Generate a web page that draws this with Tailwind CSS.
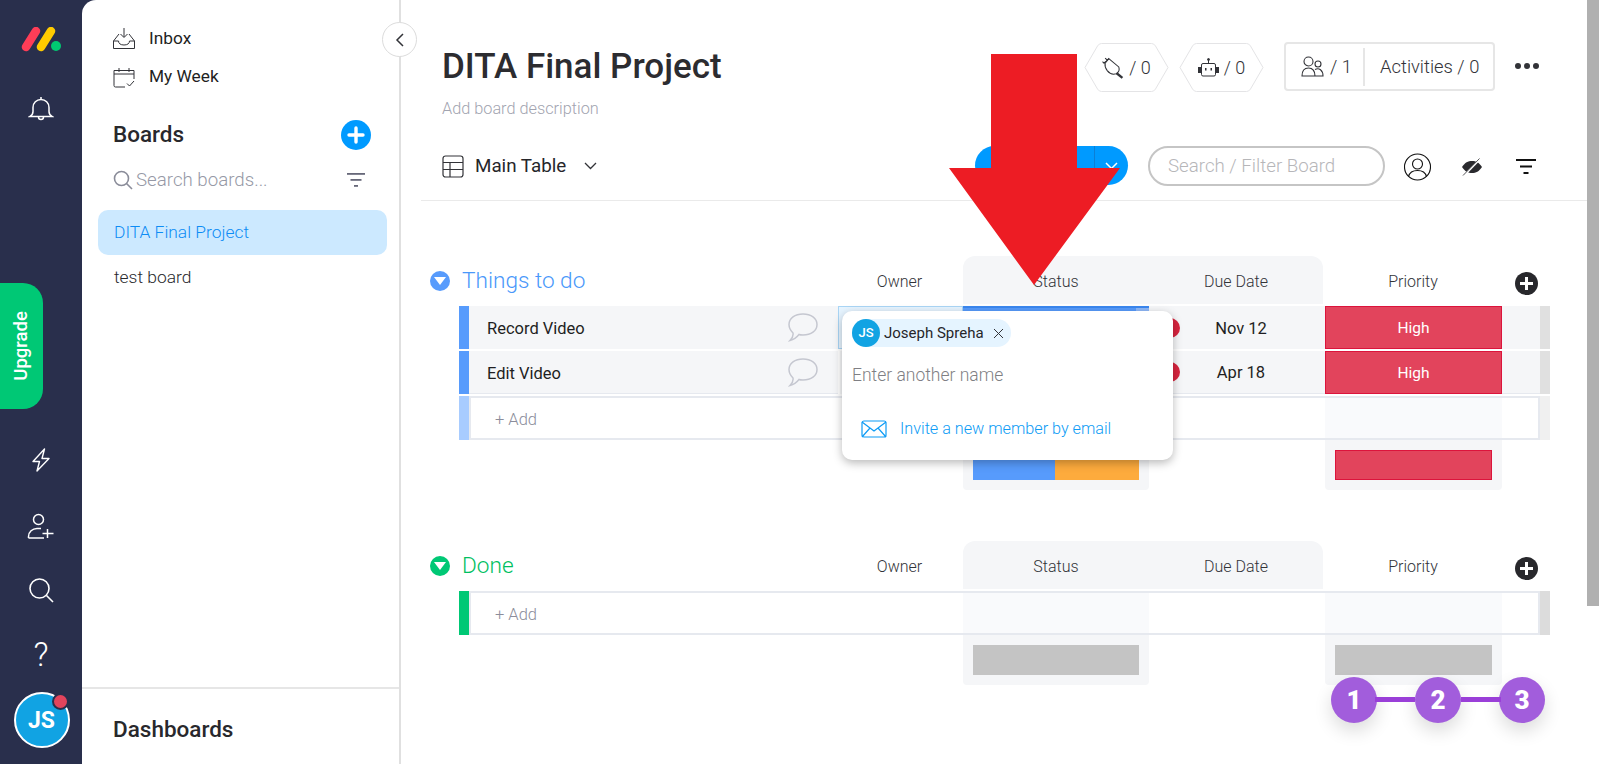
<!DOCTYPE html>
<html><head><meta charset="utf-8"><script src="https://cdn.jsdelivr.net/npm/@tailwindcss/browser@4"></script></head>
<body class="m-0">
<div class="flex w-[1599px] h-[764px] overflow-hidden bg-[#292f4c] font-['Roboto',sans-serif] text-[#323338]">
  <!-- rail -->
  <nav class="w-[82px] shrink-0 flex flex-col items-center pt-[27px]">
    <svg width="42" height="26" viewBox="0 0 42 26"><path d="M6 20 L16 4" stroke="#ff3d57" stroke-width="8.500" stroke-linecap="round"/><path d="M21 20 L31 4" stroke="#ffcb00" stroke-width="8.500" stroke-linecap="round"/><circle cx="36" cy="19" r="5" fill="#00ca72"/></svg>
    <svg class="mt-[43px]" width="26" height="26" viewBox="0 0 26 26" fill="none" stroke="#fff" stroke-width="1.500"><path d="M2 20.500h22c-2.500-1.500-3-3-3-5v-4c0-4.500-3.500-8-8-8s-8 3.500-8 8v4c0 2-.5 3.500-3 5z"/><path d="M10.500 21c0 1.500 1 2.500 2.500 2.500s2.500-1 2.500-2.500M13 1v2.500"/></svg>
    <div class="mt-[161px] self-start w-[43px] h-[126px] bg-[#00c875] rounded-r-[20px] flex items-center justify-center">
      <span class="-rotate-90 text-white text-[18.500px] font-medium whitespace-nowrap">Upgrade</span>
    </div>
    <svg class="mt-[39px]" width="24" height="24" viewBox="0 0 24 24" fill="none" stroke="#fff" stroke-width="1.400" stroke-linejoin="round"><path d="M15.500 1 4 13.500h6.500L8 23l12-12.500h-7z"/></svg>
    <svg class="mt-[41px]" width="28" height="26" viewBox="0 0 28 26" fill="none" stroke="#fff" stroke-width="1.500"><circle cx="11.500" cy="6.500" r="5"/><path d="M1.500 25v-1.500c0-4.500 4-8 8.500-8h4M1.500 25H17M20.500 16v9M15.500 20.500h11" /></svg>
    <svg class="mt-[38px]" width="26" height="26" viewBox="0 0 26 26" fill="none" stroke="#fff" stroke-width="1.600"><circle cx="11.500" cy="11.500" r="9.500"/><path d="M18.500 18.500 25 25"/></svg>
    <div class="mt-[37px] h-[30px] text-white text-[33px] leading-[30px] font-light">?</div>
    <div class="relative mt-[22px] ml-[1px] w-[56px] h-[56px] rounded-full bg-[#11a3e3] border-2 border-white flex items-center justify-center text-white text-[23px] font-bold pt-[2px]">JS
      <span class="absolute right-[-1px] top-[-1px] w-[17px] h-[17px] rounded-full bg-[#e2445c] border-2 border-[#292f4c]"></span>
    </div>
  </nav>
  <!-- sidebar -->
  <aside class="relative z-10 w-[319px] shrink-0 bg-white rounded-tl-[14px] border-r-2 border-[#e0e0e0] flex flex-col">
    <div class="flex-1 pl-[31px] pt-[28px]">
      <div class="flex items-center gap-[14px] h-[22px] text-[17.300px] text-[#1f1f23]">
        <svg width="22" height="22" viewBox="0 0 22 22" fill="none" stroke="#323338" stroke-width="1"><path d="M11 0v9M7.500 6 11 9.500 14.500 6M6 6 .5 13v7.500h21V13L16 6M.5 13h5c0 2.500 2 4 5.500 4s5.500-1.500 5.500-4h5"/></svg>
        <span>Inbox</span>
      </div>
      <div class="flex items-center gap-[14px] h-[22px] mt-[16px] text-[17.300px] text-[#1f1f23]">
        <svg width="22" height="22" viewBox="0 0 22 22" fill="none" stroke="#323338" stroke-width="1"><path d="M12 21H2.500A1.500 1.500 0 0 1 1 19.500V4.500h20V13M1 8h20M6 2v4M16 2v4M14 17.500l2.500 2.500 4.500-5"/></svg>
        <span>My Week</span>
      </div>
      <div class="flex items-center justify-between h-[30px] mt-[32px] pr-[28px]">
        <span class="text-[22.500px] font-medium text-[#28282c]">Boards</span>
        <span class="w-[30px] h-[30px] rounded-full bg-[#009aff] flex items-center justify-center">
          <svg width="18" height="18" viewBox="0 0 18 18"><path d="M9 2v14M2 9h14" stroke="#fff" stroke-width="3.400" stroke-linecap="round"/></svg>
        </span>
      </div>
      <div class="flex items-center h-[24px] mt-[18px] pr-[34px]">
        <svg width="20" height="20" viewBox="0 0 20 20" fill="none" stroke="#8a8c99" stroke-width="1.600"><circle cx="8.500" cy="8.500" r="7"/><path d="m13.500 13.500 5.500 5.500"/></svg>
        <span class="ml-[3px] text-[18.700px] font-light text-[#9699a6]">Search boards...</span>
        <svg class="ml-auto" width="18" height="16" viewBox="0 0 18 16" fill="#676879"><rect width="18" height="1.800" y="1"/><rect x="3.500" width="11" height="1.800" y="7"/><rect x="7" width="4" height="1.800" y="13"/></svg>
      </div>
      <div class="-ml-[15px] mr-[12px] mt-[18px] h-[45px] rounded-[10px] bg-[#cce9ff] flex items-center pl-[16px] text-[17.400px] font-light text-[#0d8cf5]">DITA Final Project</div>
      <div class="mt-[10px] ml-[1px] text-[17.400px] font-light text-[#28282c] leading-[24px]">test board</div>
    </div>
    <div class="h-[77px] border-t-2 border-[#e6e6e6] pl-[31px] pt-[26px] text-[22.500px] leading-[28px] font-medium text-[#28282c]">Dashboards</div>
    <button class="absolute right-[-18px] top-[22px] w-[35px] h-[35px] rounded-full bg-white border border-[#dcdcdc] flex items-center justify-center">
      <svg width="10" height="14" viewBox="0 0 10 14" fill="none" stroke="#323338" stroke-width="1.500"><path d="M8 1 2 7l6 6"/></svg>
    </button>
  </aside>
  <!-- main -->
  <main class="relative w-[1186px] shrink-0 bg-white pl-[20px]">
    <!-- board header -->
    <header class="h-[201px] pl-[21px] border-b border-[#eaeaea]">
      <div class="flex items-start h-[146px]">
        <div class="pt-[45px] w-[642px]">
          <h1 class="text-[35px] leading-[44px] font-medium text-[#2c2c30]">DITA Final Project</h1>
          <p class="mt-[7px] text-[16.300px] leading-[26px] font-light text-[#a2a4b0]">Add board description</p>
        </div>
        <div class="relative mt-[43px] w-[85px] h-[49px] flex items-center justify-center gap-[5px] text-[18px] font-light">
          <svg class="absolute inset-0" width="85" height="49" viewBox="0 0 85 49" fill="none" stroke="#e4e4e6"><path d="M1 24.500 13.500 3q1.500-2.500 4-2.500h50q2.500 0 4 2.500L84 24.500 71.500 46q-1.500 2.500-4 2.500h-50q-2.500 0-4-2.500z"/></svg>
          <svg class="relative" width="22" height="22" viewBox="0 0 21 21" fill="none" stroke="#323338" stroke-width="1"><path d="M6.500 1.500 16 9.500c1 3-.5 5.500-2.500 6.500-3 1-6.500-.5-8.500-3-1.500-2-2.500-4.500-2-7z"/><path d="M4 4 1.500 6M6.500 1.500 4 4M5 3 3 1M2.500 6.500.5 4.500"/><path d="m14 15.500 5.500 4.500" stroke-width="2.200"/></svg>
          <span class="relative">/ 0</span>
        </div>
        <div class="relative mt-[43px] ml-[10px] w-[85px] h-[49px] flex items-center justify-center gap-[5px] text-[18px] font-light">
          <svg class="absolute inset-0" width="85" height="49" viewBox="0 0 85 49" fill="none" stroke="#e4e4e6"><path d="M1 24.500 13.500 3q1.500-2.500 4-2.500h50q2.500 0 4 2.500L84 24.500 71.500 46q-1.500 2.500-4 2.500h-50q-2.500 0-4-2.500z"/></svg>
          <svg class="relative" width="21" height="19" viewBox="0 0 21 19" fill="none" stroke="#323338" stroke-width="1"><circle cx="10.500" cy="1.500" r="1" fill="#323338"/><path d="M10.500 2v3.500M5 5.500h11a1.500 1.500 0 0 1 1.500 1.500v9.500a1.500 1.500 0 0 1-1.500 1.500H5a1.500 1.500 0 0 1-1.500-1.500V7A1.500 1.500 0 0 1 5 5.500z"/><rect x=".5" y="9.500" width="2.500" height="5" fill="#323338"/><rect x="18" y="9.500" width="2.500" height="5" fill="#323338"/><rect x="7" y="10" width="1.500" height="2.500" fill="#323338" stroke="none"/><rect x="12.500" y="10" width="1.500" height="2.500" fill="#323338" stroke="none"/></svg>
          <span class="relative">/ 0</span>
        </div>
        <div class="mt-[42px] ml-[20px] w-[211px] h-[49px] rounded-[4px] border-2 border-[#e6e6e6] flex items-center text-[18.400px] font-light">
          <div class="w-[79px] flex items-center pl-[15px] gap-[6px] h-[38px] border-r-2 border-[#e6e6e6]">
            <svg width="23" height="21" viewBox="0 0 23 21" fill="none" stroke="#323338" stroke-width="1.100"><circle cx="7.500" cy="5.500" r="4.500"/><circle cx="17" cy="8" r="3"/><path d="M1 20c0-5 2.500-8 6.500-8s6.500 3 6.500 8zM14 13.500c4-2 8 .5 8 6.500h-8"/></svg>
            <span>/ 1</span>
          </div>
          <span class="pl-[15px] whitespace-nowrap">Activities / 0</span>
        </div>
        <div class="mt-[63px] ml-[20px] flex gap-[3px]"><span class="w-[6px] h-[6px] rounded-full bg-[#323338]"></span><span class="w-[6px] h-[6px] rounded-full bg-[#323338]"></span><span class="w-[6px] h-[6px] rounded-full bg-[#323338]"></span></div>
      </div>
      <div class="flex items-start">
        <div class="flex items-center w-[533px] h-[40px]">
          <svg width="22" height="23" viewBox="0 0 22 23" fill="none" stroke="#323338" stroke-width="1.200"><rect x="1" y="1" width="20" height="21" rx="2.500"/><path d="M1 7.500h20M1 14.500h20M8 7.500V22"/></svg>
          <span class="ml-[11px] pt-[1px] text-[18.800px] font-normal text-[#26262a]">Main Table</span>
          <svg class="ml-[18px]" width="13" height="8" viewBox="0 0 13 8" fill="none" stroke="#323338" stroke-width="1.300"><path d="m1 1 5.500 5.500L12 1"/></svg>
        </div>
        <div class="w-[153px] h-[39px] rounded-full bg-[#009aff] flex justify-end">
          <div class="w-[34px] border-l border-[#0b7fd6] flex items-center justify-center">
            <svg width="13" height="8" viewBox="0 0 13 8" fill="none" stroke="#fff" stroke-width="1.500"><path d="m1 1 5.500 5.500L12 1"/></svg>
          </div>
        </div>
        <div class="ml-[20px] w-[237px] h-[40px] rounded-full border-2 border-[#c5c5c5] flex items-center pl-[18px] pt-[1px] text-[18.700px] font-light text-[#b6b6b9]">Search / Filter Board</div>
        <div class="flex items-center h-[40px] pt-[1px]">
          <svg class="ml-[19px]" width="27" height="28" viewBox="0 0 27 28" fill="none" stroke="#111" stroke-width="1.100"><circle cx="13.500" cy="14" r="13"/><circle cx="13.500" cy="11" r="5"/><path d="M4.500 23.500c1-4 5-6 9-6s8 2 9 6"/></svg>
          <svg class="ml-[31px]" width="20" height="18" viewBox="0 0 20 18"><path d="M0 9c3-4.500 6-6 10-6s7 1.500 10 6c-3 4.500-6 6-10 6S3 13.500 0 9z" fill="#2a2a2e"/><path d="M2.500 17 18 1" stroke="#fff" stroke-width="1.800"/><path d="M1 17.500 17.500 .5" stroke="#2a2a2e" stroke-width=".8"/></svg>
          <svg class="ml-[34px]" width="20" height="16" viewBox="0 0 20 16" fill="#111"><rect width="20" height="2"/><rect x="4" y="6.500" width="12" height="2"/><rect x="7.500" y="13" width="5" height="2"/></svg>
        </div>
      </div>
    </header>

    <!-- group 1 -->
    <section class="mt-[55px]">
      <div class="flex h-[48px]">
        <div class="w-[416px] flex items-center pl-[9px] gap-[12px] pt-[1px]">
          <span class="w-[20px] h-[20px] rounded-full bg-[#579bfc] flex items-center justify-center"><svg width="12" height="8" viewBox="0 0 12 8"><path d="M0 0h12L6 8z" fill="#fff"/></svg></span>
          <span class="text-[22.600px] font-light text-[#4a98fa]">Things to do</span>
        </div>
        <div class="w-[125px] mr-[1px] flex items-center justify-center pt-[3px] text-[16px] font-light">Owner</div>
        <div class="w-[360px] flex rounded-t-[12px] bg-[#f5f6f8] pt-[3px] text-[16px] font-light">
          <div class="w-[186px] flex items-center justify-center">Status</div>
          <div class="w-[174px] flex items-center justify-center">Due Date</div>
        </div>
        <div class="w-[176px] ml-[2px] flex items-center justify-center pt-[3px] text-[16px] font-light">Priority</div>
        <div class="w-[50px] flex items-center justify-center pt-[6px]"><span class="w-[23px] h-[23px] rounded-full bg-[#28282c] flex items-center justify-center"><svg width="15" height="15" viewBox="0 0 15 15"><path d="M7.500 1v13M1 7.500h13" stroke="#fff" stroke-width="3"/></svg></span></div>
      </div>
      <div class="ml-[38px] mt-[2px] grid grid-cols-[10px_369px_125px_186px_176px_177px_38px_10px] gap-y-[2px]">
        <!-- row 1 -->
        <div class="h-[43px] bg-[#579bfc]"></div>
        <div class="bg-[#f5f6f8] pl-[18px] pr-[20px] flex items-center justify-between text-[16.500px] text-[#1f1f23]"><span class="pt-[3px]">Record Video</span>
          <svg width="30" height="29" viewBox="0 0 30 29" fill="none" stroke="#c5c7d0" stroke-width="1.500"><path d="M15 1c8 0 14 4 14 10.500S23 22 15 22c-2 0-3 0-4-.5-2 2.500-5 5-9 6 2-2 3.500-4.500 3-7.500C3 18 1 15 1 11.500 1 5 7 1 15 1z"/></svg></div>
        <div class="bg-[#e6f4ff] border border-[#a9d5f5]"></div>
        <div class="flex border-t-2 border-[#3b87ef]"><div class="flex-1 bg-[#579bfc]"></div><div class="w-[13px] bg-[#8fb8f8]"></div></div>
        <div class="relative bg-[#f5f6f8] flex items-center justify-center pl-[8px] pt-[3px] text-[16.500px] text-[#1f1f23]"><span class="absolute left-[11px] top-[12px] w-[20px] h-[20px] rounded-full bg-[#d8253f]"></span>Nov 12</div>
        <div class="bg-[#e2445c] border border-[#dc143c] flex items-center justify-center pt-[3px] text-white text-[15.500px]">High</div>
        <div class="bg-[#f5f6f8]"></div>
        <div class="bg-[#e0e0e0]"></div>
        <!-- row 2 -->
        <div class="h-[43px] bg-[#579bfc]"></div>
        <div class="bg-[#f5f6f8] pl-[18px] pr-[20px] flex items-center justify-between text-[16.500px] text-[#1f1f23] border-b border-[#e6e9ef]"><span class="pt-[5px]">Edit Video</span>
          <svg width="30" height="29" viewBox="0 0 30 29" fill="none" stroke="#c5c7d0" stroke-width="1.500"><path d="M15 1c8 0 14 4 14 10.500S23 22 15 22c-2 0-3 0-4-.5-2 2.500-5 5-9 6 2-2 3.500-4.500 3-7.500C3 18 1 15 1 11.500 1 5 7 1 15 1z"/></svg></div>
        <div class="bg-[#f5f6f8] border-l-2 border-white"></div>
        <div class="bg-[#579bfc]"></div>
        <div class="relative bg-[#f5f6f8] flex items-center justify-center pl-[8px] pt-[3px] text-[16.500px] text-[#1f1f23] border-b border-[#e6e9ef]"><span class="absolute left-[11px] top-[11px] w-[20px] h-[20px] rounded-full bg-[#d8253f]"></span>Apr 18</div>
        <div class="bg-[#e2445c] border border-[#dc143c] flex items-center justify-center pt-[3px] text-white text-[15.500px]">High</div>
        <div class="bg-[#f5f6f8] border-b border-[#e6e9ef]"></div>
        <div class="bg-[#e0e0e0]"></div>
        <!-- add row -->
        <div class="h-[44px] bg-[#a8ccff]"></div>
        <div class="bg-white border-y-2 border-[#e6e9ef] border-l-2 pl-[24px] pt-[4px] flex items-center text-[16.500px] font-light text-[#8b8d9b]">+ Add</div>
        <div class="bg-white border-y-2 border-[#e6e9ef]"></div>
        <div class="bg-[#f9fafc] border-y-2 border-[#e6e9ef]"></div>
        <div class="bg-white border-y-2 border-[#e6e9ef]"></div>
        <div class="bg-[#f9fafc] border-y-2 border-[#e6e9ef]"></div>
        <div class="bg-white border-y-2 border-r-2 border-[#e6e9ef]"></div>
        <div class="bg-[#f0f0f0]"></div>
        <!-- summary -->
        <div class="col-start-4 -mt-[2px] h-[50px] bg-[#f5f6f8] rounded-b-[4px] px-[10px] pt-[10px]"><div class="flex h-[30px]"><div class="w-[82px] bg-[#579bfc]"></div><div class="flex-1 bg-[#fdab3d]"></div></div></div>
        <div class="col-start-6 -mt-[2px] h-[50px] bg-[#f5f6f8] rounded-b-[4px] px-[10px] pt-[10px]"><div class="h-[30px] bg-[#e2445c] border border-[#dc143c]"></div></div>
      </div>
    </section>

    <!-- group 2 -->
    <section class="mt-[51px]">
      <div class="flex h-[48px]">
        <div class="w-[416px] flex items-center pl-[9px] gap-[12px] pt-[1px]">
          <span class="w-[20px] h-[20px] rounded-full bg-[#00c875] flex items-center justify-center"><svg width="12" height="8" viewBox="0 0 12 8"><path d="M0 0h12L6 8z" fill="#fff"/></svg></span>
          <span class="text-[22.600px] font-light text-[#00c05f]">Done</span>
        </div>
        <div class="w-[125px] mr-[1px] flex items-center justify-center pt-[3px] text-[16px] font-light">Owner</div>
        <div class="w-[360px] flex rounded-t-[12px] bg-[#f5f6f8] pt-[3px] text-[16px] font-light">
          <div class="w-[186px] flex items-center justify-center">Status</div>
          <div class="w-[174px] flex items-center justify-center">Due Date</div>
        </div>
        <div class="w-[176px] ml-[2px] flex items-center justify-center pt-[3px] text-[16px] font-light">Priority</div>
        <div class="w-[50px] flex items-center justify-center pt-[6px]"><span class="w-[23px] h-[23px] rounded-full bg-[#28282c] flex items-center justify-center"><svg width="15" height="15" viewBox="0 0 15 15"><path d="M7.500 1v13M1 7.500h13" stroke="#fff" stroke-width="3"/></svg></span></div>
      </div>
      <div class="ml-[38px] mt-[2px] grid grid-cols-[10px_369px_125px_186px_176px_177px_38px_10px]">
        <div class="h-[44px] bg-[#00c875]"></div>
        <div class="bg-white border-y-2 border-l-2 border-[#e6e9ef] pl-[24px] pt-[4px] flex items-center text-[16.500px] font-light text-[#8b8d9b]">+ Add</div>
        <div class="bg-white border-y-2 border-[#e6e9ef]"></div>
        <div class="bg-[#f9fafc] border-y-2 border-[#e6e9ef]"></div>
        <div class="bg-white border-y-2 border-[#e6e9ef]"></div>
        <div class="bg-[#f9fafc] border-y-2 border-[#e6e9ef]"></div>
        <div class="bg-white border-y-2 border-r-2 border-[#e6e9ef]"></div>
        <div class="bg-[#dcdcdc]"></div>
        <div class="col-start-4 h-[50px] bg-[#f5f6f8] rounded-b-[4px] px-[10px] pt-[10px]"><div class="h-[30px] bg-[#c4c4c4]"></div></div>
        <div class="col-start-6 h-[50px] bg-[#f5f6f8] rounded-b-[4px] px-[10px] pt-[10px]"><div class="h-[30px] bg-[#c4c4c4]"></div></div>
      </div>
    </section>

    <!-- owner popup -->
    <div class="absolute left-[441px] top-[311px] w-[331px] h-[149px] rounded-[10px] bg-white shadow-[0_3px_10px_rgba(0,0,0,0.28)] pl-[10px] pt-[8px]">
      <div class="inline-flex items-center h-[28px] rounded-full bg-[#e5f4ff] pr-[7px] text-[15px] text-[#26262a]">
        <span class="w-[28px] h-[28px] rounded-full bg-[#11a3e3] text-white text-[13px] font-medium flex items-center justify-center">JS</span>
        <span class="ml-[4px]">Joseph Spreha</span>
        <svg class="ml-[9px]" width="11" height="11" viewBox="0 0 11 11" stroke="#323338" stroke-width="1"><path d="m1 1 9 9M10 1l-9 9"/></svg>
      </div>
      <div class="mt-[16px] text-[17.500px] leading-[24px] font-light text-[#7f7f84]">Enter another name</div>
      <div class="mt-[31px] flex items-center pl-[9px] text-[16.200px] leading-[22px] font-light text-[#0d9cf5]">
        <svg width="26" height="18" viewBox="0 0 26 18" fill="none" stroke="#0d9cf5" stroke-width="1.200"><rect x="1" y="1" width="24" height="16" rx="2"/><path d="m1 2 12 9 12-9M1 17l8-9M25 17l-8-9"/></svg>
        <span class="ml-[13px]">Invite a new member by email</span>
      </div>
    </div>

    <!-- red arrow annotation -->
    <svg class="absolute left-[548px] top-[54px]" width="172" height="232" viewBox="0 0 172 232"><path d="M42 0h86v114h43L85 231 0 114h42z" fill="#ed1c24"/></svg>

    <!-- step badges -->
    <div class="absolute left-[930px] top-[677px] w-[214px] h-[46px] flex items-center justify-between">
      <span class="relative w-[46px] h-[46px] rounded-full bg-[#a25ddc] shadow-[0_8px_18px_rgba(0,0,0,0.14)] text-white text-[26px] font-black flex items-center justify-center">1</span>
      <span class="relative w-[46px] h-[46px] rounded-full bg-[#a25ddc] shadow-[0_8px_18px_rgba(0,0,0,0.14)] text-white text-[26px] font-black flex items-center justify-center">2</span>
      <span class="relative w-[46px] h-[46px] rounded-full bg-[#a25ddc] shadow-[0_8px_18px_rgba(0,0,0,0.14)] text-white text-[26px] font-black flex items-center justify-center">3</span>
      <span class="absolute left-[44px] w-[40px] top-[20px] h-[5px] bg-[#9a3fd8]"></span>
      <span class="absolute right-[44px] w-[40px] top-[20px] h-[5px] bg-[#9a3fd8]"></span>
    </div>
  </main>
  <!-- scrollbar -->
  <div class="w-[12px] shrink-0 bg-white"><div class="h-[606px] bg-[#b0b0b0]"></div></div>
</div>
</body></html>
